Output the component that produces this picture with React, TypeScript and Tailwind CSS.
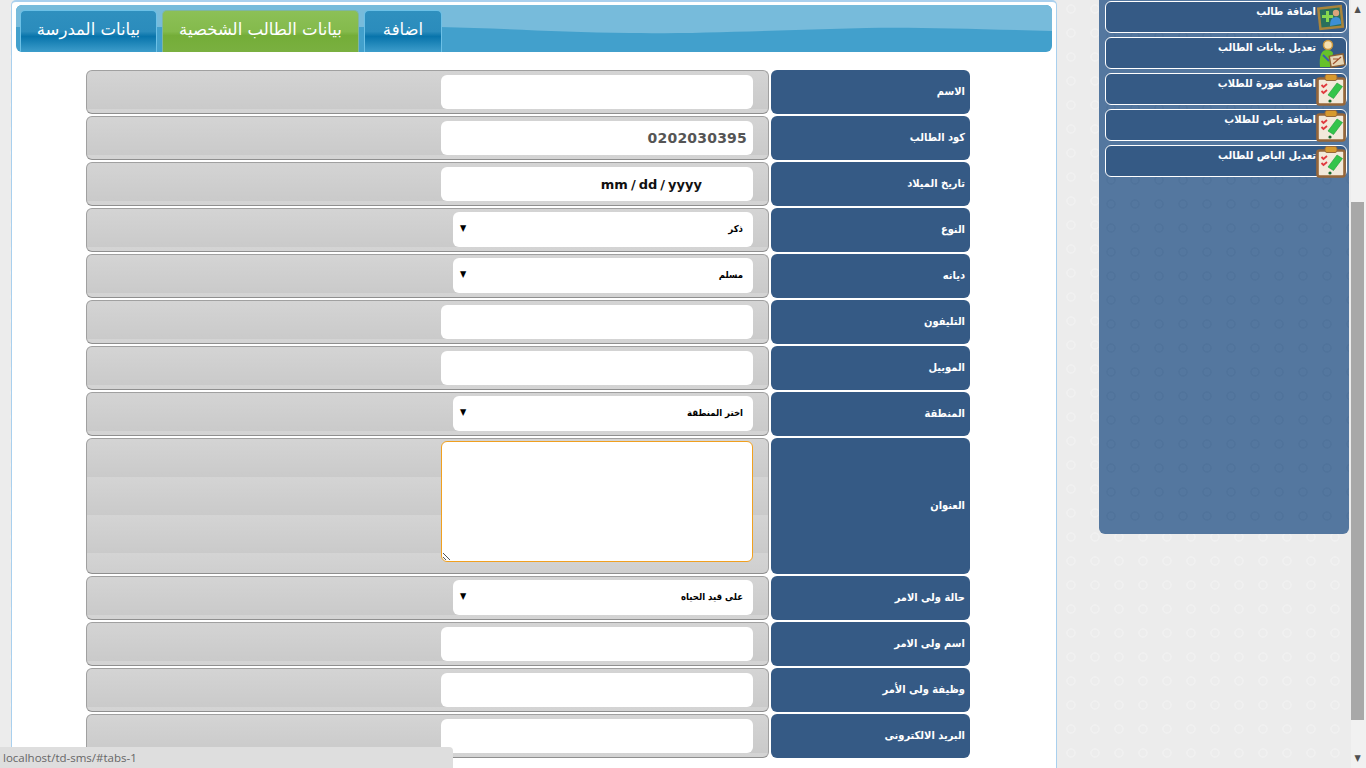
const fields = [
  { label: "الاسم", type: "text", value: "" },
  { label: "كود الطالب", type: "code", value: "0202030395" },
  { label: "تاريخ الميلاد", type: "date", value: "mm / dd / yyyy" },
  { label: "النوع", type: "select", value: "ذكر" },
  { label: "ديانه", type: "select", value: "مسلم" },
  { label: "التليفون", type: "text", value: "" },
  { label: "الموبيل", type: "text", value: "" },
  { label: "المنطقة", type: "select", value: "اختر المنطقة" },
  { label: "العنوان", type: "area", value: "" },
  { label: "حالة ولى الامر", type: "select", value: "على قيد الحياه" },
  { label: "اسم ولى الامر", type: "text", value: "" },
  { label: "وظيفة ولى الأمر", type: "text", value: "" },
  { label: "البريد الالكترونى", type: "text", value: "" },
];

const menu = [
  { label: "اضافة طالب", icon: "board" },
  { label: "تعديل بيانات الطالب", icon: "person" },
  { label: "اضافة صورة للطلاب", icon: "clip" },
  { label: "اضافة باص للطلاب", icon: "clip" },
  { label: "تعديل الباص للطالب", icon: "clip" },
];

function MenuIcon({ name }: { name: string }) {
  if (name === "board") {
    return (
      <svg width="30" height="30" viewBox="0 0 30 30">
        <rect x="2" y="4" width="25" height="23" fill="#a9853c" transform="rotate(-6 15 15)" />
        <rect x="4.5" y="6.5" width="20" height="18" fill="#2a6f5c" transform="rotate(-6 15 15)" />
        <path d="M6 13h4V9h3v4h4v3h-4v4h-3v-4H6z" fill="#86d64f" />
        <circle cx="20" cy="11" r="3.2" fill="#dba47c" />
        <path d="M14 24c0-6 2-9 6-9s5 3 5 7z" fill="#3d8fd4" />
      </svg>
    );
  }
  if (name === "person") {
    return (
      <svg width="30" height="30" viewBox="0 0 30 30">
        <circle cx="12" cy="7" r="4.5" fill="#f6dfb0" stroke="#c9963f" strokeWidth="1.5" />
        <path d="M4 29c-1-11 1-17 7-17 3 0 5 1 6 3l-3 14z" fill="#66c22a" />
        <path d="M7 17l6 6" stroke="#3a62a8" strokeWidth="2" />
        <rect x="14" y="17" width="14" height="11" fill="#e6d6b6" stroke="#8a5f32" strokeWidth="1.4" transform="rotate(-10 21 22)" />
        <path d="M17 26l8-7M17 21h5" stroke="#a0522d" strokeWidth="1.2" />
      </svg>
    );
  }
  return (
    <svg width="30" height="32" viewBox="0 0 30 32">
      <rect x="1.5" y="4.5" width="27" height="26" rx="2" fill="#f2e9da" stroke="#96673a" strokeWidth="2.6" />
      <rect x="9" y="0.5" width="12" height="6" rx="2" fill="#d79a2e" stroke="#96673a" />
      <path d="M5.5 11l2 2 3.5-3M5.5 17l2 2 3.5-3" fill="none" stroke="#e0393e" strokeWidth="1.8" />
      <path d="M21 9l5.5 3.5-9 12-5.5-3.5z" fill="#34c44a" stroke="#1f9a38" strokeWidth="0.6" />
      <circle cx="14" cy="27" r="1.6" fill="#14642a" />
    </svg>
  );
}

function Control({ type, value }: { type: string; value: string }) {
  if (type === "select") {
    return (
      <div className="relative mr-[15px] mt-[3px] h-[35px] w-[300px]">
        <select
          dir="rtl"
          defaultValue={value}
          className="h-full w-full appearance-none rounded-[6px] bg-white pb-[1px] pr-[10px] font-['DejaVu_Sans_Condensed',sans-serif] text-[9.5px] font-bold text-black"
        >
          <option>{value}</option>
        </select>
        <span className="absolute left-[7px] top-[12px] text-[9px] leading-none text-black">▼</span>
      </div>
    );
  }
  if (type === "area") {
    return (
      <div className="relative mr-[15px] mt-[2px] h-[121px] w-[312px] rounded-[6px] border border-[#f0a020] bg-white">
        <svg className="absolute bottom-0 left-0" width="9" height="9" viewBox="0 0 9 9">
          <path d="M1 1l7 7M1 5l3 3" stroke="#555" strokeWidth="1" />
        </svg>
      </div>
    );
  }
  return (
    <input
      readOnly
      value={value}
      className={`mr-[15px] mt-[4px] h-[34px] w-[312px] rounded-[6px] bg-white text-right font-['DejaVu_Sans',sans-serif] font-bold ${
        type === "code"
          ? "pr-[6px] text-[14px] tracking-[0.2px] text-[#555555]"
          : "pr-[51px] text-[13px] text-[#111111] [word-spacing:-1.5px]"
      }`}
    />
  );
}

export default function App() {
  return (
    <div className="flex h-[768px] w-[1366px] overflow-hidden bg-[#ececec] bg-[radial-gradient(circle,transparent_3px,#f0f0f0_3.5px,#f0f0f0_4.5px,transparent_5px)] bg-[length:24px_24px] bg-[position:3px_-3px] font-['DejaVu_Sans_Condensed',sans-serif]">
      <main className="ml-[11px] h-[768px] w-[1046px] shrink-0 rounded-t-[5px] border-x border-t-[2px] border-[#a9d0ee] bg-white px-1">
        <div className="relative mt-[3px] flex h-[47px] items-end gap-[5px] overflow-hidden rounded-[6px] bg-[#42a0cc] pl-1">
          <svg className="absolute inset-0 h-full w-full" viewBox="0 0 1036 47" preserveAspectRatio="none">
            <path d="M0 0H1036V26C960 24 900 22 850 23 760 25 680 29 614 28 540 27 480 23 424 22H0z" fill="#77bbdb" />
          </svg>
          {[
            { label: "بيانات المدرسة", width: "w-[137px]", active: false },
            { label: "بيانات الطالب الشخصية", width: "w-[197px]", active: true },
            { label: "اضافة", width: "w-[78px]", active: false },
          ].map((tab) => (
            <div
              key={tab.label}
              className={`relative flex h-[42px] items-center justify-center rounded-t-[5px] border-x border-t pb-[3px] font-['DejaVu_Sans',sans-serif] text-[16.5px] text-white ${tab.width} ${
                tab.active
                  ? "border-[#7fb6a0] bg-[linear-gradient(#8cc056_0%,#84ba4c_50%,#74ad38_60%,#7ab040_100%)]"
                  : "border-[#6cc0e6] bg-[linear-gradient(#2f90bf_0%,#2b8cbc_50%,#0874ab_62%,#3d9dcb_100%)]"
              }`}
            >
              {tab.label}
            </div>
          ))}
        </div>
        <form className="ml-[70px] mt-[18px] flex w-[884px] flex-col gap-[2px]">
          {fields.map((field) => (
            <div key={field.label} className={`flex gap-[2px] ${field.type === "area" ? "h-[136px]" : "h-[44px]"}`}>
              <div className="flex w-[683px] justify-end rounded-[6px] border border-[#a0a0a0] border-b-[#8f8f8f] bg-[linear-gradient(#d4d4d4,#cacaca)] bg-[length:100%_38px]">
                <Control type={field.type} value={field.value} />
              </div>
              <div className="flex w-[199px] items-center justify-end rounded-[6px] bg-[#355a85] pr-[5px] text-[11px] font-bold text-white">
                {field.label}
              </div>
            </div>
          ))}
        </form>
      </main>

      <aside className="ml-[42px] flex h-[534px] w-[250px] shrink-0 flex-col gap-[4px] rounded-b-[6px] bg-[#54779f] bg-[radial-gradient(circle,transparent_3px,#50739b_3.5px,#50739b_4.5px,transparent_5px)] bg-[length:24px_24px] px-[6px] pt-[1px] pr-[2px]">
        {menu.map((item) => (
          <div
            key={item.label}
            className="flex h-[32px] items-start justify-end rounded-[6px] border border-white bg-[#355a85] text-[11px] font-bold text-white"
          >
            <span className="mt-[1px] leading-[18px]">{item.label}</span>
            <span className="shrink-0">
              <MenuIcon name={item.icon} />
            </span>
          </div>
        ))}
      </aside>

      <div className="ml-[2px] flex h-[768px] w-[15px] shrink-0 flex-col items-center bg-[#f1f1f1] pr-[2px]">
        <span className="mt-[4px] h-[198px] text-[9px] leading-[10px] text-[#505050]">▲</span>
        <div className="h-[518px] w-[13px] bg-[#a8a8a8]" />
        <span className="mt-[33px] text-[9px] leading-[10px] text-[#505050]">▼</span>
      </div>

      <div className="fixed bottom-0 left-0 flex h-[21px] w-[453px] items-center rounded-tr-[4px] bg-[#dedede] pl-[3px] font-['Open_Sans',sans-serif] text-[11.5px] text-[#666666]">
        localhost/td-sms/#tabs-1
      </div>
    </div>
  );
}
